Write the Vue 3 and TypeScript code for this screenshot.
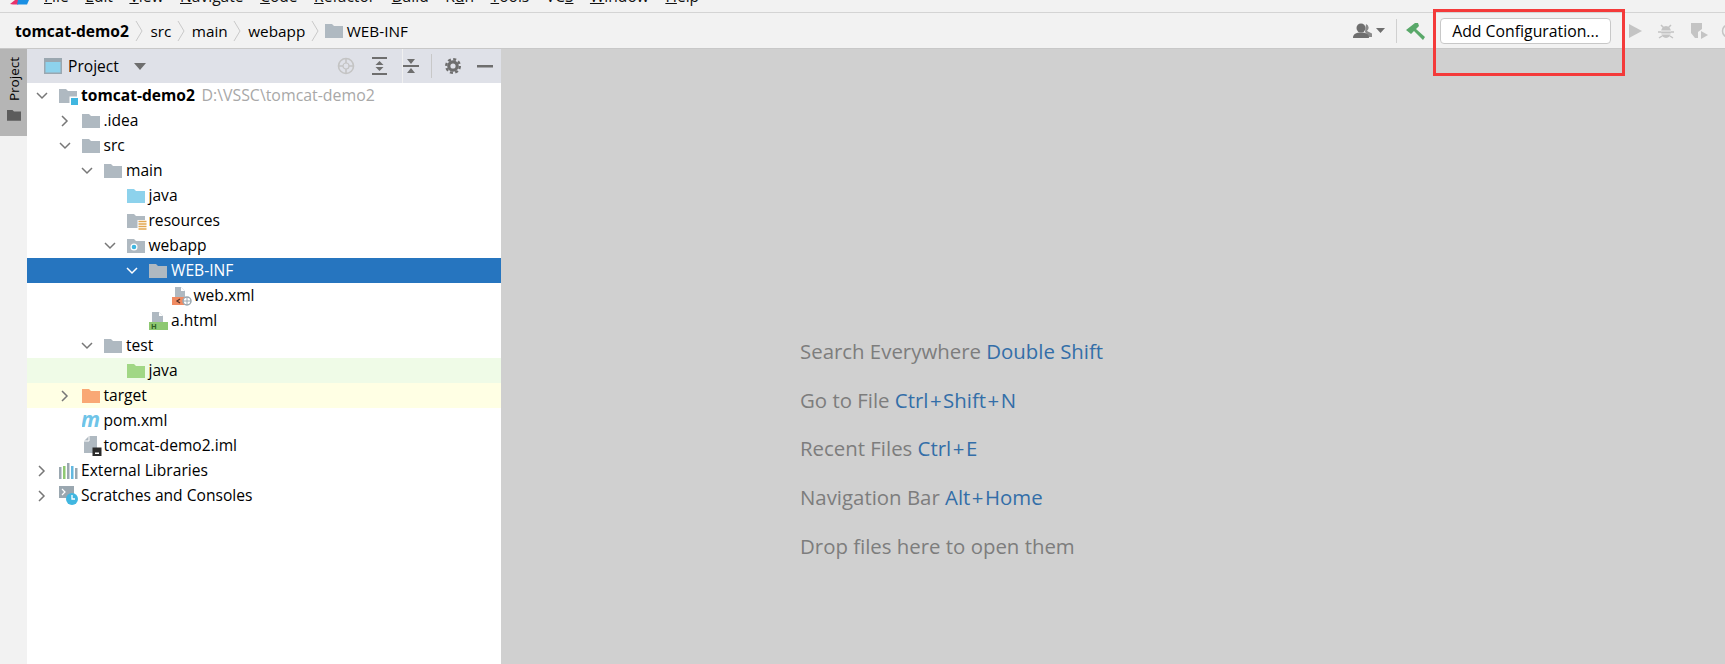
<script setup lang="ts">
interface TreeRow {
  label: string;
  level: number;
  icon: string;
  arrow?: "open" | "closed";
  bold?: boolean;
  hint?: string;
  tone?: "selected" | "test" | "excluded";
}

const menus = [
  { pre: "", key: "F", rest: "ile" },
  { pre: "", key: "E", rest: "dit" },
  { pre: "", key: "V", rest: "iew" },
  { pre: "", key: "N", rest: "avigate" },
  { pre: "", key: "C", rest: "ode" },
  { pre: "", key: "R", rest: "efactor" },
  { pre: "", key: "B", rest: "uild" },
  { pre: "R", key: "u", rest: "n" },
  { pre: "", key: "T", rest: "ools" },
  { pre: "VC", key: "S", rest: "" },
  { pre: "", key: "W", rest: "indow" },
  { pre: "", key: "H", rest: "elp" },
];

const crumbs = ["src", "main", "webapp"];

const rows: TreeRow[] = [
  { label: "tomcat-demo2", level: 0, icon: "module", arrow: "open", bold: true, hint: "D:\\VSSC\\tomcat-demo2" },
  { label: ".idea", level: 1, icon: "folder", arrow: "closed" },
  { label: "src", level: 1, icon: "folder", arrow: "open" },
  { label: "main", level: 2, icon: "folder", arrow: "open" },
  { label: "java", level: 3, icon: "source" },
  { label: "resources", level: 3, icon: "resources" },
  { label: "webapp", level: 3, icon: "web", arrow: "open" },
  { label: "WEB-INF", level: 4, icon: "folder", arrow: "open", tone: "selected" },
  { label: "web.xml", level: 5, icon: "xml" },
  { label: "a.html", level: 4, icon: "html" },
  { label: "test", level: 2, icon: "folder", arrow: "open" },
  { label: "java", level: 3, icon: "testsrc", tone: "test" },
  { label: "target", level: 1, icon: "excluded", arrow: "closed", tone: "excluded" },
  { label: "pom.xml", level: 1, icon: "maven" },
  { label: "tomcat-demo2.iml", level: 1, icon: "iml" },
  { label: "External Libraries", level: 0, icon: "libs", arrow: "closed" },
  { label: "Scratches and Consoles", level: 0, icon: "scratch", arrow: "closed" },
];

const hints = [
  { text: "Search Everywhere", keys: ["Double Shift"] },
  { text: "Go to File", keys: ["Ctrl", "Shift", "N"] },
  { text: "Recent Files", keys: ["Ctrl", "E"] },
  { text: "Navigation Bar", keys: ["Alt", "Home"] },
  { text: "Drop files here to open them", keys: [] },
];

const folderPath = "M0 1h7l2 2h9v12H0z";
const folderColor: Record<string, string> = {
  folder: "#afb9c1",
  source: "#8dd2ec",
  testsrc: "#a1d785",
  excluded: "#f9a875",
  web: "#afb9c1",
  module: "#afb9c1",
  resources: "#afb9c1",
};

function rowIndent(row: TreeRow): string {
  return `${15 + row.level * 22.5}px`;
}
</script>

<template>
  <div class="ide">
    <div class="menu-bar">
      <svg class="logo" width="20" height="12" viewBox="0 0 20 12">
        <path d="M0 4L5 0h7L8 4.500H3z" fill="#e8336b" />
        <path d="M8 0h11l-2 4.500H7z" fill="#1a8fe3" />
      </svg>
      <span v-for="m in menus" :key="m.pre + m.key + m.rest" class="menu-item">{{ m.pre }}<u>{{ m.key }}</u>{{ m.rest }}</span>
    </div>

    <div class="nav-bar">
      <span class="crumb-root">tomcat-demo2</span>
      <template v-for="c in crumbs" :key="c">
        <svg class="sep" width="8" height="22" viewBox="0 0 8 22">
          <path d="M1 1l6 10-6 10" fill="none" stroke="#c9c9c9" />
        </svg>
        <span class="crumb">{{ c }}</span>
      </template>
      <svg class="sep" width="8" height="22" viewBox="0 0 8 22">
        <path d="M1 1l6 10-6 10" fill="none" stroke="#c9c9c9" />
      </svg>
      <svg class="crumb-folder" width="18" height="15" viewBox="0 0 18 15">
        <path :d="folderPath" fill="#afb9c1" />
      </svg>
      <span class="crumb">WEB-INF</span>

      <div class="actions">
        <svg class="person" width="20" height="16" viewBox="0 0 20 16">
          <path d="M13 1a4 4 0 0 1 1 7l5 2.500V14h-4c0-2-2-4-3-5z" fill="#8a8a8a" />
          <circle cx="8" cy="5" r="4.500" fill="#6e6e6e" />
          <path d="M0 15c0-4 3-5.500 8-5.500s8 1.500 8 5.500z" fill="#6e6e6e" />
        </svg>
        <svg class="caret" width="9" height="5" viewBox="0 0 9 5"><path d="M0 0h9L4.500 5z" fill="#6e6e6e" /></svg>
        <span class="divider"></span>
        <svg class="hammer" width="20" height="18" viewBox="0 0 20 18">
          <path d="M0 8L9 1h3l1 3-3 3 9 8-2 3-9-9-3 3z" fill="#59a869" />
        </svg>
        <button class="run-config">Add Configuration...</button>
        <svg class="play" width="13" height="14" viewBox="0 0 13 14"><path d="M0 0l13 7-13 7z" fill="#c4c4c4" /></svg>
        <svg class="bug" width="16" height="16" viewBox="0 0 16 16">
          <ellipse cx="8" cy="9" rx="5" ry="6" fill="#c4c4c4" />
          <path d="M3 2l3 3M13 2l-3 3M0 9h3M13 9h3M1 15l3-2M15 15l-3-2" stroke="#c4c4c4" stroke-width="1.500" />
          <path d="M3 8h10M3 11h10" stroke="#f2f2f2" />
        </svg>
        <svg class="cover" width="19" height="18" viewBox="0 0 19 18">
          <path d="M1 1h11v6l-4 3v6H5l-4-5z" fill="#c4c4c4" />
          <path d="M11 9l7 4-7 4z" fill="#c4c4c4" />
        </svg>
        <svg class="profile" width="16" height="16" viewBox="0 0 16 16">
          <circle cx="8" cy="8" r="6.500" fill="none" stroke="#c4c4c4" stroke-width="1.500" />
        </svg>
      </div>
    </div>

    <div class="workspace">
      <aside class="strip">
        <div class="strip-tab">
          <span class="strip-label">Project</span>
          <svg width="14" height="12" viewBox="0 0 18 15"><path :d="folderPath" fill="#5c5c5c" /></svg>
        </div>
      </aside>

      <section class="panel">
        <header class="panel-head">
          <svg width="18" height="16" viewBox="0 0 18 16">
            <rect width="18" height="16" fill="#9aa7b0" />
            <rect x="1.500" y="4" width="15" height="10.500" fill="#8dd2ec" />
          </svg>
          <span class="panel-title">Project</span>
          <svg class="caret-big" width="12" height="7" viewBox="0 0 12 7"><path d="M0 0h12L6 7z" fill="#6e6e6e" /></svg>
          <div class="panel-tools">
            <svg width="18" height="18" viewBox="0 0 18 18">
              <circle cx="9" cy="9" r="7.500" fill="none" stroke="#c4c4c4" stroke-width="1.600" />
              <circle cx="9" cy="9" r="3" fill="none" stroke="#c4c4c4" stroke-width="1.200" />
              <path d="M9 1v5M9 12v5M1 9h5M12 9h5" stroke="#c4c4c4" stroke-width="1.600" />
            </svg>
            <svg class="tool-expand" width="15" height="18" viewBox="0 0 15 18">
              <path d="M0 1h15M0 17h15" stroke="#6e6e6e" stroke-width="2" />
              <path d="M7.500 4l4 4h-8zM7.500 14l4-4h-8z" fill="#6e6e6e" />
            </svg>
            <span class="tool-gap"></span>
            <svg class="tool-collapse" width="16" height="18" viewBox="0 0 16 18">
              <path d="M0 9h16" stroke="#6e6e6e" stroke-width="2" />
              <path d="M8 7L4 2h8zM8 11l4 5H4z" fill="#6e6e6e" />
            </svg>
            <span class="tool-divider"></span>
            <svg class="tool-gear" width="16" height="16" viewBox="0 0 16 16">
              <circle cx="8" cy="8" r="4.200" fill="none" stroke="#6e6e6e" stroke-width="3.200" />
              <circle cx="8" cy="8" r="6.800" fill="none" stroke="#6e6e6e" stroke-width="2.400" stroke-dasharray="3 2.340" />
            </svg>
            <svg class="tool-hide" width="16" height="3" viewBox="0 0 16 3"><rect width="16" height="2.500" fill="#6e6e6e" /></svg>
          </div>
        </header>

        <ul class="tree">
          <li
            v-for="row in rows"
            :key="row.label + row.level"
            class="tree-row"
            :class="row.tone"
            :style="{ paddingLeft: rowIndent(row) }"
          >
            <span class="arrow">
              <svg v-if="row.arrow === 'open'" width="12" height="8" viewBox="0 0 12 8">
                <path d="M1 1l5 5 5-5" fill="none" :stroke="row.tone === 'selected' ? '#fff' : '#777'" stroke-width="1.500" />
              </svg>
              <svg v-else-if="row.arrow === 'closed'" width="8" height="12" viewBox="0 0 8 12">
                <path d="M1 1l5 5-5 5" fill="none" stroke="#777" stroke-width="1.500" />
              </svg>
            </span>

            <span class="icon">
              <svg v-if="folderColor[row.icon]" width="20" height="18" viewBox="0 0 20 18">
                <path d="M0 2h7l2 2h9v12H0z" :fill="folderColor[row.icon]" />
                <template v-if="row.icon === 'module'">
                  <rect x="10.500" y="9.500" width="8.500" height="8.500" fill="#fff" />
                  <rect x="12" y="11" width="7" height="7" fill="#40b6e0" />
                </template>
                <template v-if="row.icon === 'web'">
                  <circle cx="7" cy="10" r="3.500" fill="#fff" />
                  <circle cx="7" cy="10" r="2.300" fill="#40b6e0" />
                </template>
                <template v-if="row.icon === 'resources'">
                  <rect x="10.500" y="8" width="9.500" height="10" fill="#fff" />
                  <path d="M11.500 9.500h8M11.500 12h8M11.500 14.500h8M11.500 17h8" stroke="#e2a64f" stroke-width="1.300" />
                </template>
              </svg>

              <svg v-else-if="row.icon === 'xml'" width="20" height="20" viewBox="0 0 20 20">
                <path d="M3 1h6l4 4v6H3z" fill="#afb9c1" />
                <path d="M9 1v4h4" fill="#fff" />
                <rect y="11" width="13" height="8" fill="#f08b62" />
                <path d="M8 13l-3 2 3 2" fill="none" stroke="#59352a" stroke-width="1.300" />
                <circle cx="15" cy="15" r="4" fill="#fff" stroke="#9aa7b0" stroke-width="1.500" />
                <path d="M11 15h8M15 11v8" stroke="#9aa7b0" />
              </svg>

              <svg v-else-if="row.icon === 'html'" width="20" height="20" viewBox="0 0 20 20">
                <path d="M3 1h7l4 4v6H3z" fill="#afb9c1" />
                <path d="M10 1v4h4" fill="#fff" />
                <rect y="11" width="19" height="8" fill="#8ec872" />
                <text x="2" y="18" class="icon-h">H</text>
              </svg>

              <svg v-else-if="row.icon === 'maven'" width="20" height="16" viewBox="0 0 20 16">
                <text x="-1" y="14" class="icon-m">m</text>
              </svg>

              <svg v-else-if="row.icon === 'iml'" width="20" height="20" viewBox="0 0 20 20">
                <path d="M2 5l5-5h8v17H2z" fill="#afb9c1" />
                <path d="M7 0v5H2" fill="none" stroke="#fff" />
                <rect x="10.500" y="11.500" width="9" height="8.500" fill="#2b2b2b" />
                <rect x="13" y="16.500" width="4" height="1.500" fill="#fff" />
              </svg>

              <svg v-else-if="row.icon === 'libs'" width="20" height="16" viewBox="0 0 20 16">
                <rect x="0" y="4" width="2.500" height="12" fill="#9aa7b0" />
                <rect x="4" y="3" width="2.500" height="13" fill="#8ec872" />
                <rect x="8" y="0" width="2.500" height="16" fill="#9aa7b0" />
                <rect x="12" y="3" width="2.500" height="13" fill="#62b8e0" />
                <rect x="16" y="5" width="2.500" height="11" fill="#9aa7b0" />
              </svg>

              <svg v-else-if="row.icon === 'scratch'" width="20" height="20" viewBox="0 0 20 20">
                <rect x="0" y="0" width="15" height="12" fill="#9aa7b0" />
                <path d="M3 3l3 3-3 3" fill="none" stroke="#fff" stroke-width="1.200" />
                <circle cx="13" cy="13" r="6" fill="#40b6e0" />
                <path d="M13 9v4h3" fill="none" stroke="#fff" stroke-width="1.300" />
              </svg>
            </span>

            <span class="label" :class="{ bold: row.bold }">{{ row.label }}</span>
            <span v-if="row.hint" class="hint">{{ row.hint }}</span>
          </li>
        </ul>
      </section>

      <main class="editor">
        <p v-for="h in hints" :key="h.text" class="tip">
          {{ h.text }}
          <span class="tip-key"><template v-for="(k, i) in h.keys" :key="k"><span v-if="i > 0" class="plus">+</span>{{ k }}</template></span>
        </p>
      </main>
    </div>

    <div class="red-mark"></div>
  </div>
</template>

<style scoped>
.ide {
  position: relative;
  width: 1725px;
  height: 664px;
  overflow: hidden;
  display: flex;
  flex-direction: column;
  background: #f2f2f2;
  font-family: "Open Sans", "Noto Sans", sans-serif;
  color: #000;
}

.menu-bar {
  height: 12px;
  flex: none;
  display: flex;
  align-items: flex-end;
  gap: 16.500px;
  padding-left: 10px;
  overflow: hidden;
  border-bottom: 1px solid #d4d4d4;
  font-size: 15.600px;
  line-height: 20px;
}

.logo {
  margin-right: -2.500px;
  flex: none;
  align-self: flex-start;
}

.menu-item {
  flex: none;
  color: #111;
  transform: translateY(-6px);
}

.nav-bar {
  height: 35px;
  flex: none;
  display: flex;
  align-items: center;
  padding-left: 15px;
  border-bottom: 1px solid #c8c8c8;
  font-size: 15.300px;
}

.crumb-root {
  font-size: 15.600px;
  font-weight: 700;
  margin-right: 1px;
}

.sep {
  margin: 0 7px 0 5.500px;
}

.crumb-folder {
  margin: 0 4px 0 -1px;
}

.actions {
  margin-left: auto;
  display: flex;
  align-items: center;
  width: 372px;
  flex: none;
  overflow: hidden;
}

.person {
  flex: none;
}

.caret {
  flex: none;
  margin-left: 3px;
}

.divider {
  flex: none;
  width: 1px;
  height: 24px;
  background: #d0d0d0;
  margin: 0 9px 0 11px;
}

.hammer {
  flex: none;
}

.run-config {
  flex: none;
  width: 171px;
  height: 26px;
  margin-left: 14px;
  padding: 0;
  border: 1px solid #c8c8c8;
  border-radius: 4px;
  background: #fff;
  font: inherit;
  font-size: 15.800px;
  color: #000;
}

.play {
  flex: none;
  margin-left: 18px;
}

.bug {
  flex: none;
  margin-left: 16px;
}

.cover {
  flex: none;
  margin-left: 16px;
}

.profile {
  flex: none;
  margin-left: 12px;
}

.workspace {
  flex: 1;
  display: flex;
  min-height: 0;
}

.strip {
  width: 27px;
  flex: none;
  background: #f2f2f2;
}

.strip-tab {
  height: 87px;
  background: #b5b5b5;
  display: flex;
  flex-direction: column;
  align-items: center;
  gap: 8px;
  padding-top: 8px;
  box-sizing: border-box;
}

.strip-label {
  writing-mode: vertical-rl;
  transform: rotate(180deg);
  font-size: 13.500px;
  line-height: 16px;
}

.panel {
  width: 474px;
  flex: none;
  display: flex;
  flex-direction: column;
  background: #fff;
}

.panel-head {
  height: 34px;
  flex: none;
  display: flex;
  align-items: center;
  padding-left: 17px;
  background: #dfe1e8;
  font-size: 15.600px;
}

.panel-title {
  margin-left: 6px;
}

.caret-big {
  margin-left: 15px;
}

.panel-tools {
  margin-left: auto;
  height: 100%;
  display: flex;
  align-items: center;
  padding-right: 8px;
}

.tool-expand {
  margin-left: 17px;
}

.tool-gap {
  width: 1px;
  height: 100%;
  background: #f0f0f0;
  margin-left: 15px;
}

.tool-divider {
  width: 1px;
  height: 24px;
  background: #c8c8c8;
  margin-left: 12px;
}

.tool-gear {
  margin-left: 13px;
}

.tool-hide {
  margin-left: 16px;
}

.tree {
  list-style: none;
  margin: 0;
  padding: 0;
}

.tree-row {
  height: 25px;
  display: flex;
  align-items: center;
  font-size: 15.600px;
  white-space: nowrap;
}

.tree-row.selected {
  background: #2675bf;
  color: #fff;
}

.tree-row.test {
  background: #effbe7;
}

.tree-row.excluded {
  background: #ffffe4;
}

.arrow {
  width: 24px;
  margin: 0 5px 0 -12px;
  display: flex;
  justify-content: center;
  flex: none;
}

.icon {
  width: 22px;
  flex: none;
  display: flex;
  align-items: center;
}

.label {
  padding-bottom: 2px;
}

.bold {
  font-weight: 700;
}

.hint {
  margin-left: 6.500px;
  padding-bottom: 2px;
  color: #a8a8a8;
  font-size: 15.900px;
}

.icon-h {
  font: 700 7.500px "Open Sans", sans-serif;
  fill: #2f5e24;
}

.icon-m {
  font: italic 700 21px "Open Sans", sans-serif;
  fill: #6fc4e8;
}

.editor {
  flex: 1;
  background: #d0d0d0;
  padding: 287px 0 0 299px;
  font-size: 20.400px;
}

.tip {
  margin: 0;
  height: 48.700px;
  line-height: 30px;
  color: #7d7d7d;
}

.tip-key {
  color: #336ea8;
}

.plus {
  margin: 0 1.500px;
}

.red-mark {
  position: absolute;
  left: 1433px;
  top: 9px;
  width: 192px;
  height: 67px;
  box-sizing: border-box;
  border: 3px solid #f43a3a;
}
</style>
